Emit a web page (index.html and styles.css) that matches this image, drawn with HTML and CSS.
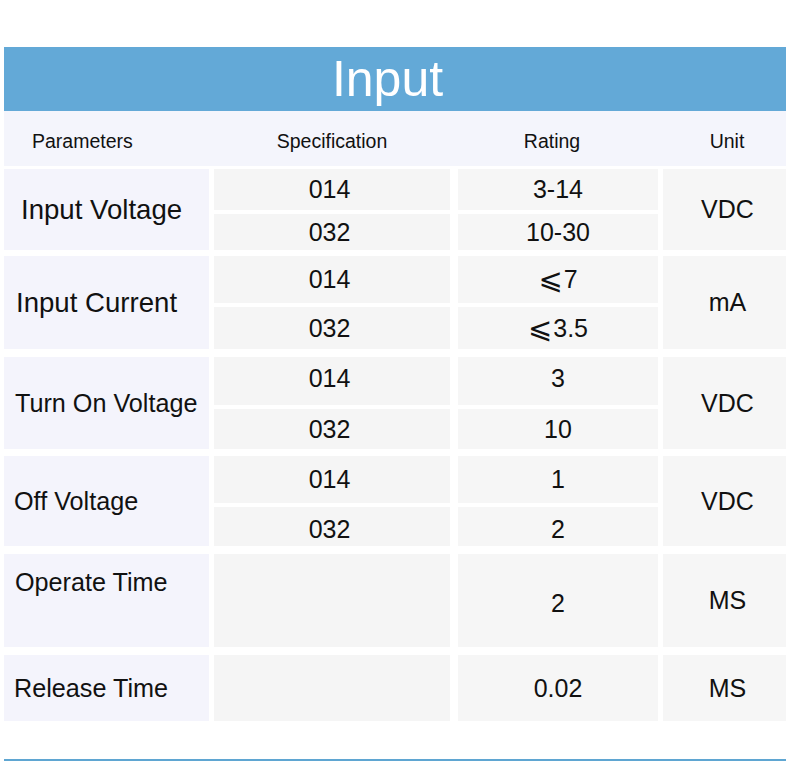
FILE: index.html
```html
<!DOCTYPE html>
<html lang="en">
<head>
<meta charset="utf-8">
<title>Input</title>
<link rel="stylesheet" href="styles.css">
</head>
<body>
<div class="page">
  <div class="title-bar">Input</div>
  <div class="head-row grid">
    <div class="h h-param">Parameters</div>
    <div class="h h-spec">Specification</div>
    <div class="h h-rating">Rating</div>
    <div class="h h-unit">Unit</div>
  </div>

  <div class="group grid g1">
    <div class="cell param p-big pad17">Input Voltage</div>
    <div class="cell val spec r1">014</div>
    <div class="cell val rate r1">3-14</div>
    <div class="cell val unit">VDC</div>
    <div class="cell val spec r2">032</div>
    <div class="cell val rate r2">10-30</div>
  </div>

  <div class="group grid g2">
    <div class="cell param p-big pad12">Input Current</div>
    <div class="cell val spec r1">014</div>
    <div class="cell val rate r1"><span class="le">⩽</span>7</div>
    <div class="cell val unit">mA</div>
    <div class="cell val spec r2">032</div>
    <div class="cell val rate r2"><span class="le">⩽</span>3.5</div>
  </div>

  <div class="group grid g3">
    <div class="cell param pad11">Turn On Voltage</div>
    <div class="cell val spec r1 up">014</div>
    <div class="cell val rate r1 up">3</div>
    <div class="cell val unit">VDC</div>
    <div class="cell val spec r2">032</div>
    <div class="cell val rate r2">10</div>
  </div>

  <div class="group grid g4">
    <div class="cell param pad10">Off Voltage</div>
    <div class="cell val spec r1">014</div>
    <div class="cell val rate r1">1</div>
    <div class="cell val unit">VDC</div>
    <div class="cell val spec r2 down">032</div>
    <div class="cell val rate r2 down">2</div>
  </div>

  <div class="group grid g5">
    <div class="cell param pad11 top">Operate Time</div>
    <div class="cell val spec single"></div>
    <div class="cell val rate single down">2</div>
    <div class="cell val unit">MS</div>
  </div>

  <div class="group grid g6">
    <div class="cell param pad10">Release Time</div>
    <div class="cell val spec single"></div>
    <div class="cell val rate single">0.02</div>
    <div class="cell val unit">MS</div>
  </div>

  <div class="bottom-line"></div>
</div>
</body>
</html>
```

FILE: styles.css
```css
html, body {
  margin: 0;
  padding: 0;
  background: #ffffff;
}

body {
  font-family: "Liberation Sans", Arial, Helvetica, sans-serif;
  color: #111111;
}

.page {
  width: 782px;
  padding: 47px 0 0 4px;
}

.title-bar {
  height: 64px;
  background: #63a9d7;
  color: #ffffff;
  font-size: 50px;
  line-height: 64px;
  text-align: center;
  padding-right: 15px;
}

.grid {
  display: grid;
  grid-template-columns: 205px 239px 200px 123px;
  column-gap: 5px;
}

.head-row {
  height: 55px;
  background: #f4f5fc;
  align-items: center;
  font-size: 19.5px;
  padding-top: 5px;
  box-sizing: border-box;
}

.h-param { padding-left: 28px; }
.h-spec { text-align: center; padding-right: 3px; }
.h-rating { text-align: center; padding-right: 12px; }
.h-unit { text-align: center; padding-left: 5px; }

.group {
  row-gap: 4px;
}

.g1 { margin-top: 3px; grid-template-rows: 41px 36px; }
.g2 { margin-top: 6px; grid-template-rows: 47px 42px; }
.g3 { margin-top: 8px; grid-template-rows: 48px 40px; }
.g4 { margin-top: 7px; grid-template-rows: 47px 39px; }
.g5 { margin-top: 8px; grid-template-rows: 93px; }
.g6 { margin-top: 8px; grid-template-rows: 66px; }

.cell {
  display: flex;
  align-items: center;
}

.param {
  grid-column: 1;
  grid-row: 1 / -1;
  background: #f4f4fc;
  font-size: 25.2px;
}

.p-big { font-size: 27.6px; }

.pad17 { padding-left: 17px; }
.pad12 { padding-left: 12px; }
.pad11 { padding-left: 11px; }
.pad10 { padding-left: 10px; }

.param.top {
  align-items: flex-start;
  padding-top: 14px;
}

.val {
  justify-content: center;
  background: #f6f6f6;
  font-size: 25px;
}

.spec {
  grid-column: 2;
  margin-right: 3px;
  padding-right: 5px;
  background: #f5f5f5;
}

.rate {
  grid-column: 3;
}

.unit {
  grid-column: 4;
  grid-row: 1 / -1;
  padding-left: 6px;
}

.r1 { grid-row: 1; }
.r2 { grid-row: 2; }
.single { grid-row: 1; }

.up { padding-bottom: 5px; }
.down { padding-top: 6px; }

.le {
  font-family: "DejaVu Sans", sans-serif;
  font-size: 29px;
  line-height: 1;
  margin-right: 1px;
}

.bottom-line {
  margin-top: 38px;
  height: 2px;
  background: #5fa6d2;
}
```
